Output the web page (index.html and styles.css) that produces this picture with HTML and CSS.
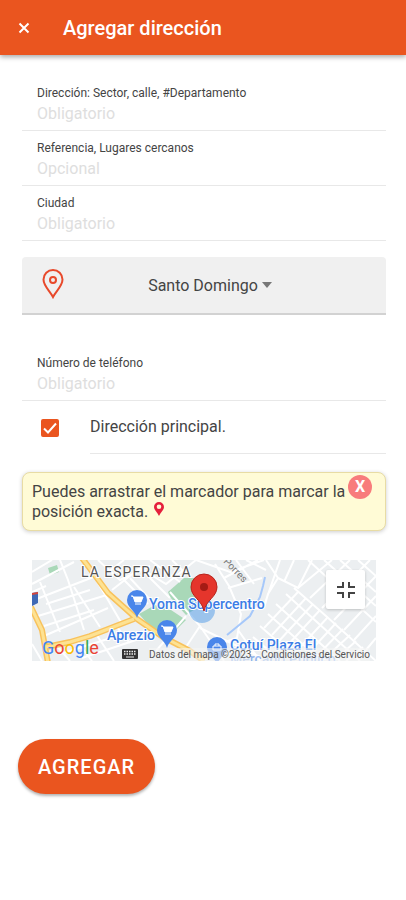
FILE: index.html
```html
<!DOCTYPE html>
<html lang="es">
<head>
  <meta charset="UTF-8">
  <meta name="viewport" content="width=device-width,initial-scale=1.0">
  <title>Agregar dirección</title>
  <link rel="stylesheet" href="styles.css">
</head>
<body>
  <header>
    <button type="button" class="close-btn" aria-label="Cerrar">
      <svg width="12" height="12" viewBox="0 0 12 12"><path d="M1.500 1.500l9 9M10.500 1.500l-9 9"/></svg>
    </button>
    <h1>Agregar dirección</h1>
  </header>

  <main>
    <form>
      <div class="field">
        <label for="direccion">Dirección: Sector, calle, #Departamento</label>
        <input type="text" id="direccion" placeholder="Obligatorio">
      </div>
      <div class="field">
        <label for="referencia">Referencia, Lugares cercanos</label>
        <input type="text" id="referencia" placeholder="Opcional">
      </div>
      <div class="field">
        <label for="ciudad">Ciudad</label>
        <input type="text" id="ciudad" placeholder="Obligatorio">
      </div>

      <div class="province">
        <svg class="province-pin" width="22" height="30" viewBox="0 0 22 30">
          <path d="M11 28C8 22 1.500 17 1.500 10.500a9.500 9.500 0 0 1 19 0C20.500 17 14 22 11 28z"/>
          <circle cx="11" cy="11" r="3"/>
        </svg>
        <select id="provincia" aria-label="Provincia">
          <option>Santo Domingo</option>
        </select>
        <svg class="province-arrow" width="10" height="6" viewBox="0 0 10 6"><path d="M0 0h10L5 6z"/></svg>
      </div>

      <div class="field">
        <label for="telefono">Número de teléfono</label>
        <input type="tel" id="telefono" placeholder="Obligatorio">
      </div>

      <div class="check-row">
        <input type="checkbox" id="principal" checked>
        <label for="principal">Dirección principal.</label>
      </div>

      <div class="notice">
        <p>Puedes arrastrar el marcador para marcar la posición exacta.
          <svg width="10" height="14" viewBox="0 0 10 14"><path fill-rule="evenodd" d="M5 0a5 5 0 0 1 5 5c0 3-3 5-5 9-2-4-5-6-5-9a5 5 0 0 1 5-5zm0 2.500a2.300 2.300 0 1 0 0 4.600 2.300 2.300 0 0 0 0-4.600z"/></svg>
        </p>
        <button type="button" class="notice-close" aria-label="Cerrar aviso">X</button>
      </div>

      <div class="map">
        <svg class="map-canvas" viewBox="0 0 344 101" preserveAspectRatio="xMidYMid slice">
          <rect width="344" height="101" fill="#eceff1"/>
          <!-- parques -->
          <g fill="#a9d8b8">
            <path d="M16 8l9-3 2 7-9 3z"/>
            <path d="M136 32l16-14h12l4 28-14 9-16-18z"/>
            <path d="M107 54l16-9 16 5 15 10-12 12-15 5z"/>
          </g>
          <!-- calles -->
          <g fill="none" stroke="#fff" stroke-width="2">
            <path d="M0 12l20-12M0 24l42-22M2 40l62-24M28 0l8 20 16 50M8 22l20 50M14 44l44-14M6 56l72-22M12 66l50-16M42 27l26 40M62 16l28 48M12 76l64-28M0 32l14-6M0 84l10 17M24 85l14 16M44 80l16 21M64 74l18 27M28 94l70-22M84 66l14 17M50 98l60-20"/>
            <path d="M66 0l22 20 30-14M76 12l16-12M80 30l28-22 26 16 30-24M92 20l24 24M98 18l24 26M108 8l30 30M118 0l30 22M140 0l14 14M138 32l30 34 24 35M154 56l-30 35M168 66l-20 30"/>
            <path d="M164 0l34 12 34-12M183 4l14 22 12 28-4 24-18 6M192 18l34-18M196 28l34-10M190 42l18 8 24-2M204 0l18 24M214 0l20 10M168 68l60 29M206 70l22 31"/>
            <path d="M234 0l12 18-10 16-4 14M248 0l-16 46M246 18l20 10 14-28M252 22l10-22M262 28l32 28 50 45M254 34l74 67M244 44l64 57M236 54l54 47M228 66l40 35M221 77l28 24"/>
            <path d="M232 68l34-36M240 75l34-37M247 81l34-37M254 87l34-37M262 94l34-37M270 100l34-37M280 101l31-32M290 101l28-26M302 101l22-20M314 101l17-14"/>
            <path d="M276 0l68 62M292 0l52 46M308 0l36 32M326 0l18 16M266 28l34-28M278 38l40-38M290 48l48-48M302 60l42-44M312 70l32-34M322 80l22-24M334 90l10-12"/>
          </g>
          <path d="M233 17l-2 9-3 11-10 19-12 10-11 9" fill="none" stroke="#a6c8fa" stroke-width="2"/>
          <!-- avenidas -->
          <g fill="none" stroke-linejoin="round">
            <path d="M50-2l9 12 17 23 29 26 26 18 27 14 14 10M-1 47l11 23 6 33M14 87l24-5 20-6 44-17" stroke="#f8c25c" stroke-width="6"/>
            <path d="M50-2l9 12 17 23 29 26 26 18 27 14 14 10M-1 47l11 23 6 33M14 87l24-5 20-6 44-17" stroke="#fde293" stroke-width="3"/>
          </g>
          <path d="M0 33l6-1v11l-6 3z" fill="#3f69b5"/>
          <path d="M0 33l6-1v2l-6 1z" fill="#d5453c"/>
          <circle cx="170" cy="50" r="13" fill="#4a98e8" fill-opacity=".5"/>

          <!-- comercios -->
          <g fill="#4a86ea">
            <path d="M105 58c-2-8-10-10-10-18a10 10 0 0 1 20 0c0 8-8 10-10 18z"/>
            <path d="M135 88c-2-8-10-10-10-18a10 10 0 0 1 20 0c0 8-8 10-10 18z"/>
            <path d="M185 105c-2-8-10-10-10-18a10 10 0 0 1 20 0c0 8-8 10-10 18z"/>
          </g>
          <g fill="#fff" stroke="#fff">
            <path d="M99 36h2l2 6h6l2-5h-9M103 44h6"/>
            <path d="M129 66h2l2 6h6l2-5h-9M133 74h6"/>
            <path d="M181 86h8v4h-8zM183 86v-2h4v2" fill="none"/>
          </g>
          <text class="map-area" x="49" y="17">LA ESPERANZA</text>
          <text class="map-street" transform="translate(191 2) rotate(46)">Porres</text>
          <g class="map-shop">
            <text x="117" y="49">Yoma Supercentro</text>
            <text x="75" y="80">Aprezio</text>
            <text x="198" y="90">Cotuí Plaza El</text>
            <text class="map-faded" x="198" y="104">Mercado Público</text>
          </g>
          <!-- marcador -->
          <path d="M172 51c-2-11-13-14-13-24a13 13 0 0 1 26 0c0 10-11 13-13 24z" fill="#e5352c" stroke="#b8241c" stroke-width="1"/>
          <circle cx="172" cy="27" r="4" fill="#a51b15"/>
        </svg>
        <div class="map-footer">
          <span class="map-logo"><i>G</i><i>o</i><i>o</i><i>g</i><i>l</i><i>e</i></span>
          <svg class="map-keys" width="16" height="10" viewBox="0 0 16 10">
            <rect width="16" height="10" rx="1" fill="#333"/>
            <path d="M2 2.500h12M2 5h12" stroke="#eee" stroke-width="1.500" stroke-dasharray="1.500 1"/>
            <path d="M4 8h8" stroke="#eee"/>
          </svg>
          <span class="map-data">Datos del mapa ©2023</span>
          <a href="#condiciones">Condiciones del Servicio</a>
        </div>
        <button type="button" class="map-full" aria-label="Salir de pantalla completa">
          <svg width="18" height="18" viewBox="0 0 18 18"><path d="M0 6h6V1M12 1v5h6M0 12h6v5M12 17v-5h6"/></svg>
        </button>
      </div>

      <button type="submit" class="submit-btn">AGREGAR</button>
    </form>
  </main>
</body>
</html>
```
FILE: styles.css
```css
:root {
  --primary: #ea551f;
  --fg: #444;
  --line: #e8e8e8;
  --placeholder: #dedede;
}
* { box-sizing: border-box; }
body {
  margin: 0;
  font-family: Roboto, "Liberation Sans", sans-serif;
  background: #fff; color: var(--fg);
}
button, input, select { font-family: inherit; }

header {
  display: flex; align-items: center; gap: 27px;
  height: 55px; padding: 0 12px;
  background: var(--primary); color: #fff;
  box-shadow: 0 2px 5px rgba(0,0,0,0.35);
}
.close-btn {
  display: flex; padding: 6px;
  background: none; border: none; cursor: pointer;
}
.close-btn svg { stroke: #fff; stroke-width: 2; fill: none; }
h1 { margin: 0; font-size: 20px; font-weight: 500; line-height: 24px; }

main { padding: 21px 20px 40px 22px; }

/* campos */
.field {
  display: flex; flex-direction: column; gap: 3px;
  padding: 10px 15px 7px;
  border-bottom: 1px solid var(--line);
}
.field label { font-size: 12px; line-height: 14px; }
.field input {
  width: 100%; height: 20px; padding: 0;
  border: none; outline: none; background: none;
  font-size: 16px; color: var(--fg);
}
.field input::placeholder { color: var(--placeholder); }

/* provincia */
.province {
  display: flex; align-items: center; position: relative;
  height: 58px; margin: 16px 0 31px;
  background: #f0f0f0;
  border-bottom: 2px solid #d2d2d2;
  border-radius: 4px 4px 0 0;
}
.province-pin {
  position: absolute; left: 20px; top: 12px;
  fill: none; stroke: #e8492b; stroke-width: 2;
  pointer-events: none;
}
.province select {
  width: 100%; height: 100%; padding: 0 16px 0 14px;
  appearance: none; border: none; background: none;
  font-size: 16px; color: var(--fg);
  text-align: center; text-align-last: center;
}
.province-arrow {
  position: absolute; left: calc(50% + 58px); top: 25px;
  fill: #777; pointer-events: none;
}

/* casilla */
.check-row {
  display: flex; align-items: center; gap: 31px;
  padding-left: 19px;
}
.check-row input {
  appearance: none; flex: none;
  width: 18px; height: 18px; margin: 0;
  border-radius: 2px;
  border: 2px solid var(--primary);
}
.check-row input:checked {
  background: var(--primary) url("data:image/svg+xml,%3Csvg xmlns='http://www.w3.org/2000/svg' viewBox='0 0 14 14'%3E%3Cpath d='M1 7.500l4 4 8-9' fill='none' stroke='white' stroke-width='2'/%3E%3C/svg%3E") center no-repeat;
}
.check-row label {
  flex: 1; height: 53px;
  font-size: 16px; line-height: 52px;
  border-bottom: 1px solid var(--line);
}

/* aviso */
.notice {
  position: relative;
  margin: 18px 0 29px; padding: 9px 32px 8px 9px;
  background: #fffbd6;
  border: 1px solid #e8dca4; border-radius: 8px;
  box-shadow: 0 1px 4px rgba(0,0,0,0.2);
}
.notice p { margin: 0; font-size: 16px; line-height: 20px; }
.notice p svg { margin-left: 2px; fill: #e5203c; vertical-align: 1px; }
.notice-close {
  position: absolute; top: 2px; right: 13px;
  width: 24px; height: 24px; padding: 0;
  border: none; border-radius: 50%;
  background: #f87c7c; color: #fff;
  font-size: 16px; font-weight: 700; line-height: 24px;
  cursor: pointer;
}

/* mapa */
.map {
  position: relative; overflow: hidden;
  margin: 0 10px;
}
.map-canvas { display: block; width: 100%; }
.map-area { font-size: 14px; letter-spacing: 1px; fill: #555; stroke: #fff; stroke-width: 2px; paint-order: stroke; }
.map-street { font-size: 10px; fill: #777; }
.map-shop { font-size: 14px; font-weight: 500; fill: #3b7de6; stroke: #fff; stroke-width: 2px; paint-order: stroke; }
.map-faded { opacity: 0.5; }
.map-footer {
  position: absolute; left: 0; right: 0; bottom: 0;
  display: flex; align-items: flex-end;
  padding: 0 6px 0 10px;
  font-size: 10px; line-height: 13px; color: #555;
}
.map-footer a {
  margin-left: auto; color: inherit; text-decoration: none;
}
.map-logo { width: 80px; font-size: 18px; line-height: 26px; }
.map-logo i { font-style: normal; color: #4285f4; }
.map-logo i:nth-child(2), .map-logo i:nth-child(6) { color: #ea4335; }
.map-logo i:nth-child(3) { color: #fbbc05; }
.map-logo i:nth-child(5) { color: #34a853; }
.map-keys { margin: 0 11px 2px 0; }
.map-data, .map-footer a { background: rgba(245,245,245,0.6); }
.map-full {
  position: absolute; top: 10px; right: 11px;
  display: flex; align-items: center; justify-content: center;
  width: 39px; height: 39px; padding: 0;
  background: #fff; border: none; border-radius: 2px;
  box-shadow: 0 1px 3px rgba(0,0,0,0.2);
  cursor: pointer;
}
.map-full svg { fill: none; stroke: #444; stroke-width: 2; }

.submit-btn {
  display: block; height: 55px;
  margin: 78px 0 0 -4px; padding: 0 20px;
  background: var(--primary); color: #fff;
  border: none; border-radius: 28px;
  font-size: 20px; font-weight: 500; letter-spacing: 1px;
  box-shadow: 0 2px 3px rgba(0,0,0,0.3);
  cursor: pointer;
}
```
